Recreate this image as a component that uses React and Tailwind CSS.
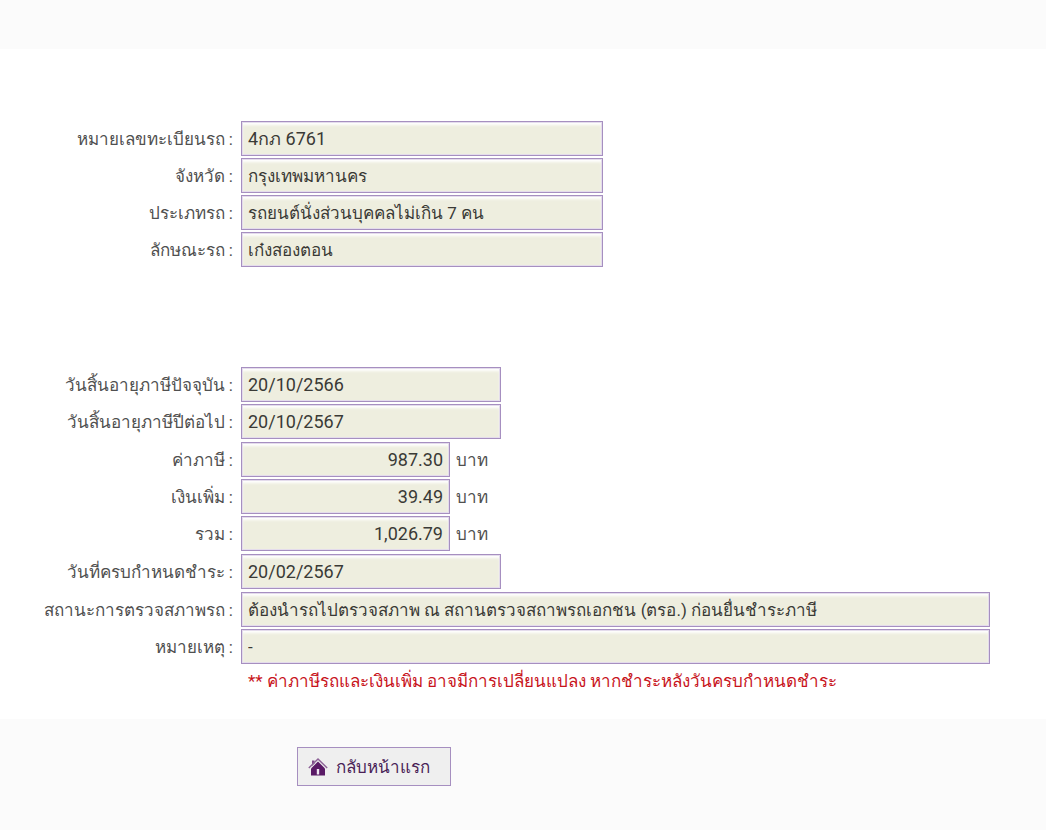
import React from "react";

const vehicle = [
  { id: "plate", label: "หมายเลขทะเบียนรถ", value: "4กภ 6761", size: "plate" },
  { id: "province", label: "จังหวัด", value: "กรุงเทพมหานคร" },
  { id: "type", label: "ประเภทรถ", value: "รถยนต์นั่งส่วนบุคคลไม่เกิน 7 คน" },
  { id: "body", label: "ลักษณะรถ", value: "เก๋งสองตอน" },
];

const taxGroups = [
  [
    { id: "expiry", label: "วันสิ้นอายุภาษีปัจจุบัน", value: "20/10/2566", size: "date" },
    { id: "nextExpiry", label: "วันสิ้นอายุภาษีปีต่อไป", value: "20/10/2567", size: "date" },
  ],
  [
    { id: "tax", label: "ค่าภาษี", value: "987.30", size: "money" },
    { id: "surcharge", label: "เงินเพิ่ม", value: "39.49", size: "money" },
    { id: "total", label: "รวม", value: "1,026.79", size: "money" },
  ],
  [{ id: "due", label: "วันที่ครบกำหนดชำระ", value: "20/02/2567", size: "date" }],
  [
    {
      id: "inspection",
      label: "สถานะการตรวจสภาพรถ",
      value: "ต้องนำรถไปตรวจสภาพ ณ สถานตรวจสถาพรถเอกชน (ตรอ.) ก่อนยื่นชำระภาษี",
      size: "full",
    },
    { id: "remark", label: "หมายเหตุ", value: "-", size: "full" },
  ],
];

const sizes = {
  text: "w-[362px] text-[17px]",
  plate: "w-[362px] text-[18px]",
  date: "w-[260px] text-[18px]",
  money: "w-[209px] text-right text-[18px]",
  full: "flex-1 text-[17px]",
};

const Field = ({ id, label, value, size = "text" }) => (
  <div className="flex items-center">
    <label htmlFor={id} className="w-[241px] shrink-0 pr-2 text-right text-[#505050]">
      {label} :
    </label>
    <input
      id={id}
      value={value}
      readOnly
      className={`h-[35px] min-w-0 border border-[#a68fc0] bg-[#eeeedf] px-1.5 text-[#3a3a36] shadow-[inset_0_0_0_1px_#e4dcec,inset_0_3px_3px_#ffffff] outline-none ${sizes[size]}`}
    />
    {size === "money" && <span className="pl-1.5 text-[#505050]">บาท</span>}
  </div>
);

const HomeIcon = () => (
  <svg className="h-5 w-5" viewBox="0 0 20 20" aria-hidden="true">
    <path d="M4 3.5h2.5v3L4 9z" fill="#7d4a88" />
    <path d="M.8 11 10 2l9.2 9" fill="none" stroke="#8d6297" strokeWidth="1.4" />
    <path d="M10 4.5 3 11.5v7h14v-7z" fill="#5a1a66" />
    <path d="M8.8 12h2.4v5.5H8.8z" fill="#f1e8f3" />
  </svg>
);

const App = () => {
  return (
    <div className="min-h-screen bg-[#fbfbfb] pt-[49px] font-['Roboto','Noto_Sans',sans-serif] text-[17px] leading-6">
      <main className="bg-white pt-[72px] pr-14 pb-[26px]">
        <section className="flex flex-col gap-0.5">
          {vehicle.map((row) => (
            <Field key={row.id} {...row} />
          ))}
        </section>

        <section className="mt-[100px] flex flex-col gap-[3px]">
          {taxGroups.map((group) => (
            <div key={group[0].id} className="flex flex-col gap-0.5">
              {group.map((row) => (
                <Field key={row.id} {...row} />
              ))}
            </div>
          ))}
        </section>

        <p className="mt-[5px] pl-[248px] text-[#c8141c]">
          ** ค่าภาษีรถและเงินเพิ่ม อาจมีการเปลี่ยนแปลง หากชำระหลังวันครบกำหนดชำระ
        </p>
      </main>

      <div className="px-[297px] pt-7">
        <button
          type="button"
          className="flex h-[39px] items-center gap-2 whitespace-nowrap border border-[#a68fc0] bg-[#efefef] pr-5 pl-2.5 text-[#4a1f57]"
        >
          <HomeIcon />
          กลับหน้าแรก
        </button>
      </div>
    </div>
  );
};

export default App;
